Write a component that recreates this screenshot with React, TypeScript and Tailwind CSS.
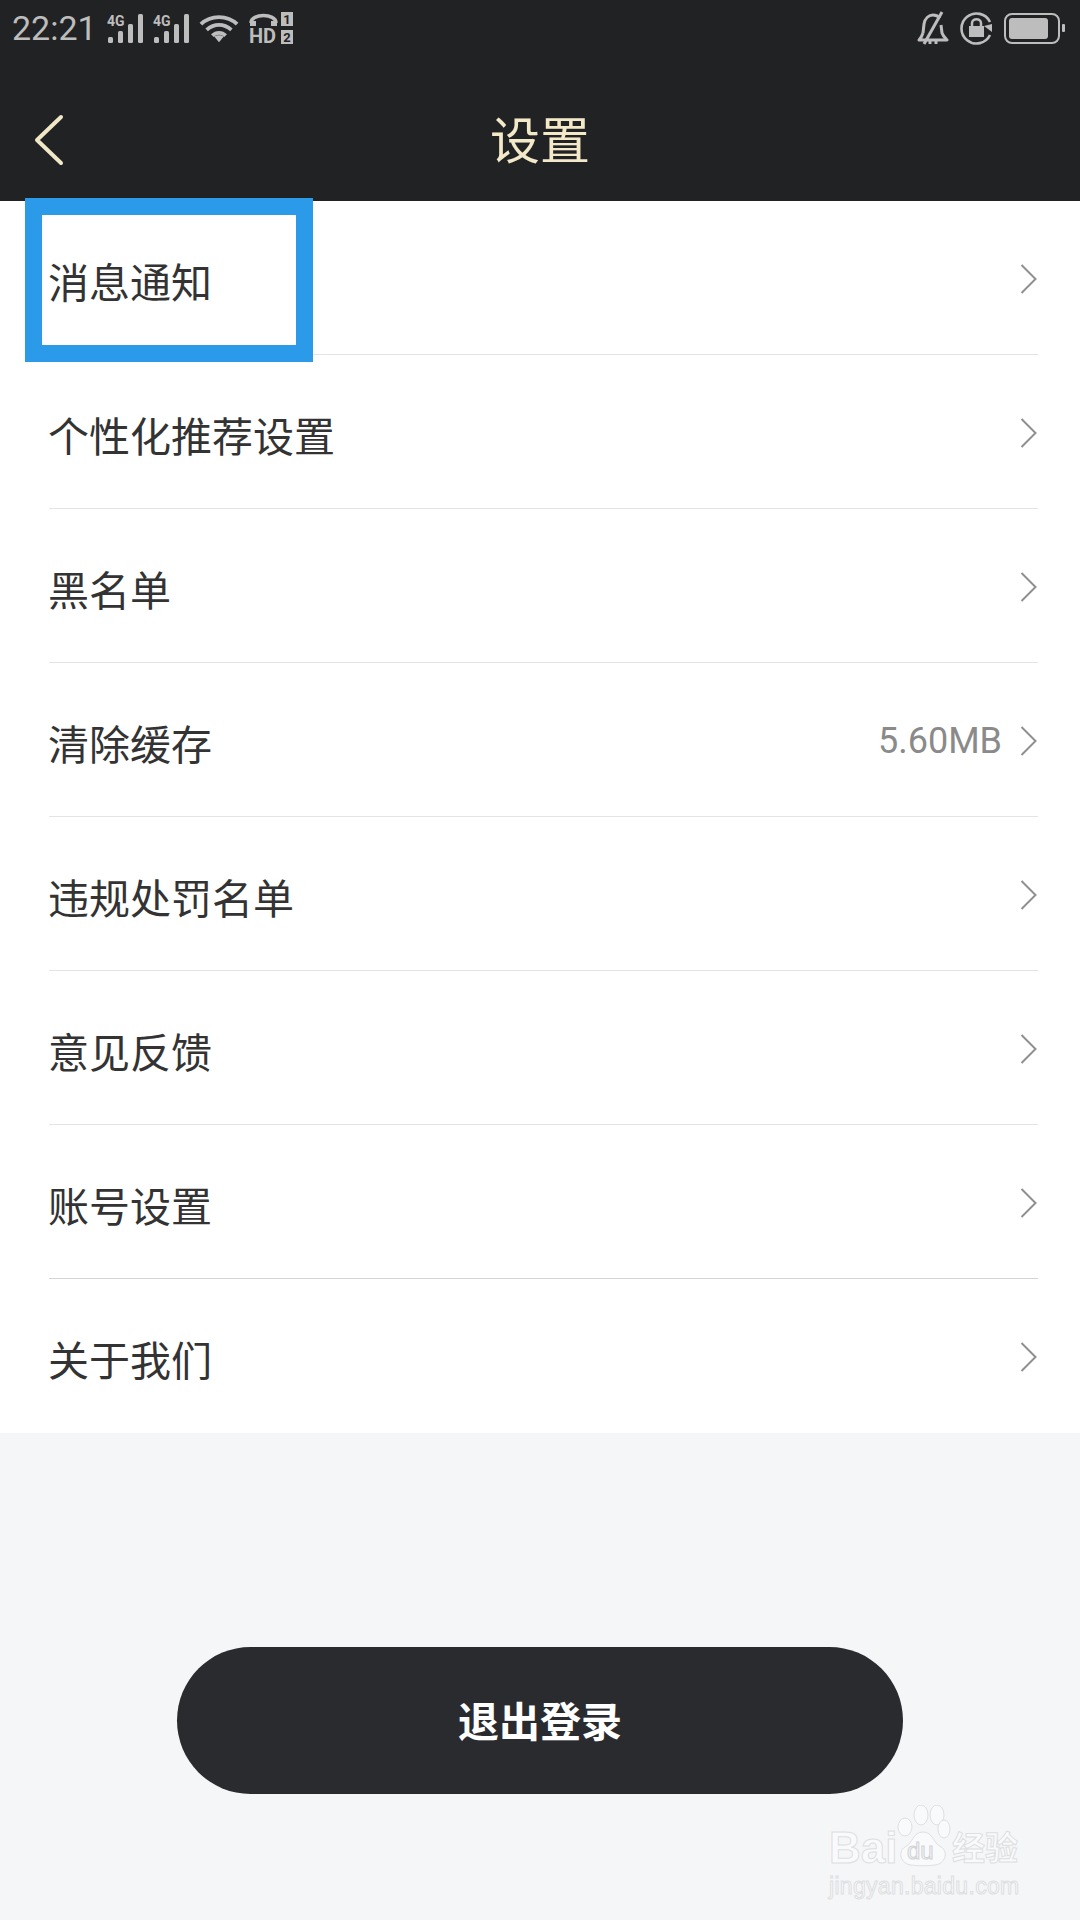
const rows = [
  { label: '消息通知' },
  { label: '个性化推荐设置' },
  { label: '黑名单' },
  { label: '清除缓存', value: '5.60MB' },
  { label: '违规处罚名单' },
  { label: '意见反馈' },
  { label: '账号设置' },
  { label: '关于我们' },
];

const cjk = "font-['Roboto','Noto_Sans_CJK_SC',sans-serif]";

function Signal() {
  return (
    <svg width="38" height="29" viewBox="0 0 38 29" className="text-[#bdbdbd]">
      <text x="0" y="12" fontSize="14" fontWeight="700" fontFamily="Roboto, sans-serif" fill="currentColor">4G</text>
      <g fill="currentColor">
        <rect x="1" y="23" width="5" height="6" rx="1.5" />
        <rect x="11" y="17" width="5" height="12" rx="1.5" />
        <rect x="21" y="10" width="5" height="19" rx="1.5" />
        <rect x="31" y="0" width="5" height="29" rx="1.5" />
      </g>
    </svg>
  );
}

function Wifi() {
  return (
    <svg width="40" height="29" viewBox="0 0 42 29" fill="none" stroke="#bdbdbd" strokeWidth="4">
      <path d="M2 10 C12 0 30 0 40 10" />
      <path d="M8 16 C16 9 26 9 34 16" />
      <path d="M14 22 C18 18 24 18 28 22" />
      <path d="M16 23 L21 29 L26 23 C23 21 19 21 16 23 Z" fill="#bdbdbd" stroke="none" />
    </svg>
  );
}

function HdCall() {
  return (
    <svg width="44" height="33" viewBox="0 0 44 33">
      <path d="M2 11 C2 1 27 1 27 11" fill="none" stroke="#bdbdbd" strokeWidth="3.5" />
      <rect x="1" y="9" width="6" height="5" fill="#bdbdbd" />
      <rect x="22" y="9" width="6" height="5" fill="#bdbdbd" />
      <text x="0" y="31" fontSize="20" fontWeight="700" fontFamily="Roboto, sans-serif" fill="#bdbdbd">HD</text>
      <rect x="32" y="0" width="12" height="14" fill="#bdbdbd" />
      <rect x="32" y="18" width="12" height="14" fill="#bdbdbd" />
      <text x="38" y="12" fontSize="13" fontWeight="700" textAnchor="middle" fontFamily="Roboto, sans-serif" fill="#212224">1</text>
      <text x="38" y="30" fontSize="13" fontWeight="700" textAnchor="middle" fontFamily="Roboto, sans-serif" fill="#212224">2</text>
    </svg>
  );
}

function MutedBell() {
  return (
    <svg width="32" height="34" viewBox="0 0 32 34" fill="none" stroke="#bdbdbd" strokeWidth="3">
      <path d="M6 22 L7 13 C8 7 12 4 16 4 C19 4 21 5 23 7" />
      <path d="M24 14 L25 22 C26 25 28 27 30 29 L2 29 C4 27 5 25 6 22" strokeLinejoin="round" />
      <path d="M7 33 L25 1" />
      <path d="M13 30 L13 33 M19 30 L19 33" />
    </svg>
  );
}

function RotationLock() {
  return (
    <svg width="33" height="33" viewBox="0 0 33 33">
      <path d="M30 23 A15 15 0 1 1 30 10" fill="none" stroke="#bdbdbd" strokeWidth="2.6" />
      <path d="M24 14 L32 12 L32 20 Z" fill="#bdbdbd" />
      <rect x="9" y="14" width="15" height="11" fill="#bdbdbd" />
      <path d="M12 14 L12 11 C12 6 21 6 21 11 L21 14" fill="none" stroke="#bdbdbd" strokeWidth="2.5" />
    </svg>
  );
}

function Battery() {
  return (
    <div className="flex items-center gap-[2px]">
      <div className="flex h-[31px] w-[56px] rounded-[8px] border-2 border-[#bdbdbd] p-[3px] pr-[10px]">
        <div className="flex-1 rounded-[3px] bg-[#bdbdbd]" />
      </div>
      <div className="h-[8px] w-[3px] rounded-[1px] bg-[#bdbdbd]" />
    </div>
  );
}

function BaiduWatermark() {
  const ghost = "text-[#f9fafb] [-webkit-text-stroke:1px_#dedfe1]";
  return (
    <div className="absolute left-[829px] top-[1805px] w-[200px] select-none">
      <div className="relative h-[62px]">
        <span className={`absolute left-0 top-[20px] text-[44px] leading-[46px] font-bold font-['Liberation_Sans',sans-serif] ${ghost}`}>Bai</span>
        <svg width="56" height="62" viewBox="0 0 56 62" className="absolute left-[66px] top-0" fill="#f9fafb" stroke="#dedfe1" strokeWidth="1">
          <ellipse cx="26" cy="10" rx="7" ry="10" />
          <ellipse cx="42" cy="10" rx="7" ry="10" />
          <ellipse cx="10" cy="22" rx="7" ry="9" />
          <ellipse cx="49" cy="24" rx="6" ry="9" />
          <path d="M28 27 C38 27 38 38 46 42 C54 47 50 59 40 60 C34 61 22 61 16 60 C6 59 2 47 10 42 C18 38 18 27 28 27 Z" />
        </svg>
        <span className="absolute left-[78px] top-[33px] text-[24px] leading-[26px] font-['Liberation_Sans',sans-serif] text-[#f5f6f8] [-webkit-text-stroke:1px_#d2d3d5]">du</span>
        <span className={`absolute left-[123px] top-[25px] text-[33px] leading-[38px] font-bold ${cjk} ${ghost}`}>经验</span>
      </div>
      <div className={`mt-[5px] text-[23px] leading-[28px] tracking-[0.3px] font-['Liberation_Sans',sans-serif] ${ghost}`}>jingyan.baidu.com</div>
    </div>
  );
}

export default function App() {
  return (
    <div className={`relative flex h-[1920px] w-[1080px] flex-col overflow-hidden bg-[#f5f6f8] ${cjk}`}>
      <header className="h-[201px] shrink-0 bg-[#212224]">
        <div className="flex h-[56px] items-center pl-[12px] pr-[15px]">
          <span className="w-[95px] shrink-0 text-[34px] leading-none text-[#bdbdbd]">22:21</span>
          <div className="flex items-center gap-[8px] pt-[1px]">
            <Signal />
            <Signal />
          </div>
          <div className="ml-[8px] pt-[1px]"><Wifi /></div>
          <div className="ml-[10px]"><HdCall /></div>
          <div className="ml-auto flex items-center gap-[11px]">
            <MutedBell />
            <RotationLock />
            <Battery />
          </div>
        </div>
        <div className="relative flex h-[145px] items-center justify-center pt-[27px]">
          <svg width="32" height="52" viewBox="0 0 32 52" fill="none" stroke="#f0e7c6" strokeWidth="4" strokeLinecap="round" strokeLinejoin="round" className="absolute left-[33px] top-[58px]">
            <path d="M28 3 L4 26 L28 49" />
          </svg>
          <h1 className="text-[50px] leading-none font-normal text-[#f3e9c8]">设置</h1>
        </div>
      </header>

      <ul className="bg-white pl-[49px] pr-[42px]">
        {rows.map((row, i) => (
          <li
            key={row.label}
            className={`flex h-[154px] items-center border-b ${i === 6 ? 'border-[#d4d4d4]' : 'border-[#e4e4e4]'} last:border-b-0`}
          >
            <span className="-ml-[1px] pt-[13px] text-[41px] leading-none text-[#333333]">{row.label}</span>
            <div className="ml-auto flex items-center gap-[18px] pr-[1px]">
              {row.value && <span className="pt-[3px] text-[36px] leading-none text-[#8a8a8a]">{row.value}</span>}
              <svg width="17" height="30" viewBox="0 0 17 30" fill="none" stroke="#8f8f8f" strokeWidth="2" className="mt-[2px]">
                <path d="M1.5 1 L15.5 15 L1.5 29" />
              </svg>
            </div>
          </li>
        ))}
      </ul>

      <div className="flex justify-center pt-[214px]">
        <button className="h-[147px] w-[726px] rounded-full bg-[#2a2b2f] pt-[6px] text-[41px] font-bold text-white">退出登录</button>
      </div>

      <div className="absolute left-[25px] top-[198px] h-[164px] w-[288px] border-[17px] border-[#2b9ae9]" />
      <BaiduWatermark />
    </div>
  );
}
